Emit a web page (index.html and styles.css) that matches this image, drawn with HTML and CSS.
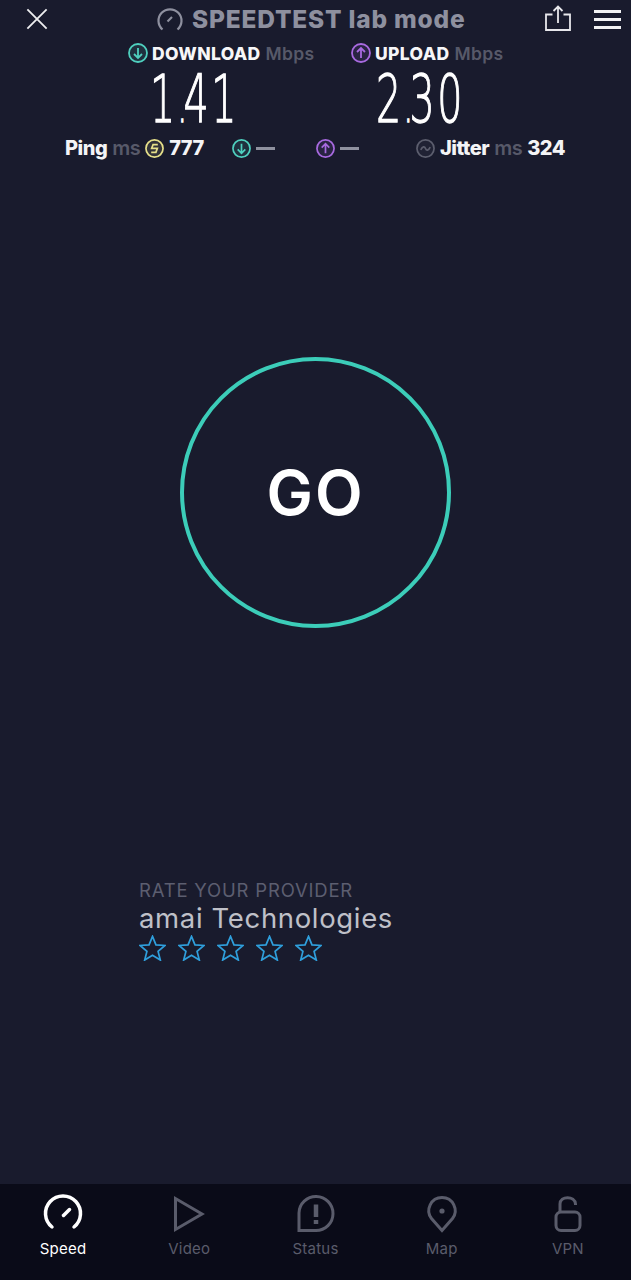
FILE: index.html
```html
<!DOCTYPE html>
<html lang="en">
<head>
<meta charset="utf-8">
<title>Speedtest</title>
<link rel="stylesheet" href="styles.css">
</head>
<body>
<div class="app">
  <header class="topbar">
    <svg class="ico-close" viewBox="0 0 24 24"><path d="M1.5 1.5 22.5 22.5M22.5 1.5 1.5 22.5"/></svg>
    <div class="title">
      <svg class="ico-title" viewBox="0 0 26 24"><path d="M5.5 22.5A11.5 11.5 0 1 1 20.5 22.5"/><path d="M10.5 14.5 15 10"/></svg>
      <span>SPEEDTEST lab mode</span>
    </div>
    <svg class="ico-share" viewBox="0 0 26 26"><path d="M7.5 9.5H1V25H25V9.5H18.5"/><path d="M13 18V1.5M8.5 6 13 1.5 17.5 6"/></svg>
    <div class="menu"><i></i><i></i><i></i></div>
  </header>

  <section class="metrics">
    <div class="metric">
      <div class="metric-label">
        <svg class="badge badge-teal" viewBox="0 0 20 20"><circle cx="10" cy="10" r="9"/><path d="M10 5V15M6 11 10 15 14 11"/></svg>
        <b>DOWNLOAD</b><span class="dim">Mbps</span>
      </div>
      <div class="metric-value value-down">1<span class="pt">.</span>41</div>
    </div>
    <div class="metric">
      <div class="metric-label">
        <svg class="badge badge-purple" viewBox="0 0 20 20"><circle cx="10" cy="10" r="9"/><path d="M10 15V5M6 9 10 5 14 9"/></svg>
        <b>UPLOAD</b><span class="dim">Mbps</span>
      </div>
      <div class="metric-value">2<span class="pt">.</span>30</div>
    </div>
  </section>

  <section class="stats">
    <div class="stat stat-ping">
      <b>Ping</b><span class="dim">ms</span>
      <svg class="badge-sm badge-yellow" viewBox="0 0 20 20"><circle cx="10" cy="10" r="9"/><path d="M13.500 6H8.500L7 9.800H13L11.500 14H6.500"/></svg>
      <b>777</b>
    </div>
    <div class="stat stat-down">
      <svg class="badge-sm badge-teal" viewBox="0 0 20 20"><circle cx="10" cy="10" r="9"/><path d="M10 5V15M6 11 10 15 14 11"/></svg>
      <i class="dash"></i>
    </div>
    <div class="stat stat-up">
      <svg class="badge-sm badge-purple" viewBox="0 0 20 20"><circle cx="10" cy="10" r="9"/><path d="M10 15V5M6 9 10 5 14 9"/></svg>
      <i class="dash"></i>
    </div>
    <div class="stat stat-jitter">
      <svg class="badge-sm badge-grey" viewBox="0 0 20 20"><circle cx="10" cy="10" r="9"/><path d="M5 11.5C7 7.5 9 7.5 10 10S13 12.5 15 8.5"/></svg>
      <b>Jitter</b><span class="dim">ms</span><b>324</b>
    </div>
  </section>

  <main class="main">
    <div class="go">GO</div>
    <div class="rate">
      <div class="rate-label">RATE YOUR PROVIDER</div>
      <div class="rate-name">amai Technologies</div>
      <div class="stars">
        <svg class="star" viewBox="0 0 28 27"><path d="M14 1.5 17.6 10.2 27 10.9 19.8 17 22.1 26 14 21.1 5.900 26 8.200 17 1 10.900 10.400 10.200Z"/></svg>
        <svg class="star" viewBox="0 0 28 27"><path d="M14 1.5 17.6 10.2 27 10.9 19.8 17 22.1 26 14 21.1 5.900 26 8.200 17 1 10.900 10.400 10.200Z"/></svg>
        <svg class="star" viewBox="0 0 28 27"><path d="M14 1.5 17.6 10.2 27 10.9 19.8 17 22.1 26 14 21.1 5.900 26 8.200 17 1 10.900 10.400 10.200Z"/></svg>
        <svg class="star" viewBox="0 0 28 27"><path d="M14 1.5 17.6 10.2 27 10.9 19.8 17 22.1 26 14 21.1 5.900 26 8.200 17 1 10.900 10.400 10.200Z"/></svg>
        <svg class="star" viewBox="0 0 28 27"><path d="M14 1.5 17.6 10.2 27 10.9 19.8 17 22.1 26 14 21.1 5.900 26 8.200 17 1 10.900 10.400 10.200Z"/></svg>
      </div>
    </div>
  </main>

  <nav class="tabs">
    <div class="tab tab-active">
      <svg viewBox="0 0 40 40"><path d="M9 33A17.500 17.500 0 1 1 31 33" class="round"/><path d="M20.500 21.500 26.500 15.500" class="round"/></svg>
      <span>Speed</span>
    </div>
    <div class="tab">
      <svg viewBox="0 0 40 40"><path d="M6.500 4.500V35.500L33 20Z"/></svg>
      <span>Video</span>
    </div>
    <div class="tab">
      <svg viewBox="0 0 40 40"><path d="M4 36.500V19A17 17 0 1 1 21 36.500Z"/><path d="M21 10.500V23" class="thick"/><path d="M21 26V30" class="thick"/></svg>
      <span>Status</span>
    </div>
    <div class="tab">
      <svg viewBox="0 0 40 40"><path d="M20 36.500 9.500 24.500C3 16 9 3.500 20 3.500S37 16 30.500 24.500Z"/><circle cx="20" cy="17" r="2.600" class="dot"/></svg>
      <span>Map</span>
    </div>
    <div class="tab">
      <svg viewBox="0 0 40 40"><rect x="8" y="18" width="24" height="18.500" rx="5"/><path d="M12 18V10C12 1.500 27 1.500 27.500 10V11"/></svg>
      <span>VPN</span>
    </div>
  </nav>
</div>
</body>
</html>
```
FILE: styles.css
```css
* { box-sizing: border-box; }
html, body { margin: 0; padding: 0; }
body { background: #191b2d; font-family: "Inter", "Open Sans", sans-serif; color: #fff; }
.app { width: 631px; height: 1280px; display: flex; flex-direction: column; overflow: hidden; }

svg { display: block; fill: none; stroke: currentColor; flex: none; }

.topbar { height: 38px; display: flex; align-items: center; padding: 0 10px 0 26px; }
.ico-close { width: 22px; height: 22px; stroke-width: 2; color: #eeeef0; }
.title { display: flex; align-items: center; gap: 9px; margin-left: 109px; color: #8e909f; font-size: 24.500px; font-weight: 800; letter-spacing: 0.8px; white-space: nowrap; }
.ico-title { width: 26px; height: 24px; stroke-width: 2.200; }
.ico-share { width: 26px; height: 26px; stroke-width: 1.800; color: #e8e8ec; margin-left: 79px; margin-top: -2px; }
.menu { display: flex; flex-direction: column; gap: 5px; margin-left: 23px; width: 28px; }
.menu i { display: block; height: 3px; background: #f2f2f4; }

.metrics { display: flex; padding-left: 128px; height: 86px; margin-top: 5px; }
.metric { width: 223px; }
.metric-label { display: flex; align-items: center; height: 20px; font-size: 17.500px; letter-spacing: 0.35px; }
.metric-label b { font-weight: 800; margin-left: 4px; color: #f6f6f8; }
.dim { color: #575969; font-weight: 600; margin-left: 5px; }
.metric-value { margin: 4px 0 0 25px; width: 81px; font-family: "DejaVu Sans", sans-serif; font-weight: 200; font-size: 66px; line-height: 66px; letter-spacing: 4px; white-space: nowrap; color: #fff; -webkit-text-stroke: 1.300px #fff; transform: scaleX(0.6); transform-origin: left center; }
.value-down { margin-left: 22px; }
.pt { font-size: 50px; letter-spacing: -6px; }

.badge { width: 20px; height: 20px; stroke-width: 1.800; }
.badge-sm { width: 19px; height: 19px; stroke-width: 1.800; }
.badge circle, .badge-sm circle { fill: currentColor; fill-opacity: 0.12; }
.badge-teal { color: #4fd0bf; }
.badge-purple { color: #a86ae0; }
.badge-yellow { color: #e6e08a; }
.badge-grey { color: #5c5e6e; }

.stats { display: flex; align-items: center; padding-left: 65px; height: 22px; margin-top: 8px; font-size: 20px; letter-spacing: -0.5px; }
.stats b { font-weight: 800; color: #f4f4f6; }
.stat { display: flex; align-items: center; }
.stat .badge-sm { margin-left: 5px; margin-right: 5px; }
.stat-ping { width: 167px; }
.stat-down { width: 84px; }
.stat-up { width: 100px; }
.stat-down .badge-sm, .stat-up .badge-sm { margin-left: 0; }
.stat-jitter .badge-sm { margin-left: 0; }
.stat-jitter .dim + b { margin-left: 5px; }
.dash { display: block; width: 19px; height: 3px; background: #8f919f; }

.main { flex: 1; display: flex; flex-direction: column; align-items: flex-start; }
.go { width: 271px; height: 271px; margin: 198px 0 0 180px; border: 4px solid #3ccdb9; border-radius: 50%; display: flex; align-items: center; justify-content: center; font-size: 62px; font-weight: 600; letter-spacing: 2px; color: #fff; }
.rate { margin: 252px 0 0 139px; }
.rate-label { font-size: 18.500px; line-height: 20px; letter-spacing: 0.8px; color: #5c5e70; font-weight: 400; white-space: nowrap; }
.rate-name { font-size: 27.500px; line-height: 34px; letter-spacing: 0.65px; margin-top: 1px; color: #bfc0c8; font-weight: 400; white-space: nowrap; }
.stars { display: flex; gap: 12px; margin-top: 0; }
.star { width: 27px; height: 26px; stroke-width: 1.800; color: #2f9fdc; }

.tabs { height: 96px; background: #0a0b18; display: grid; grid-template-columns: repeat(5, 1fr); margin-top: auto; }
.tab { display: flex; flex-direction: column; align-items: center; padding-top: 10px; color: #5a5c6b; font-size: 15px; font-weight: 400; letter-spacing: 0.25px; }
.tab svg { width: 40px; height: 40px; stroke-width: 3; }
.tab span { margin-top: 5px; line-height: 20px; }
.tab-active { color: #fff; }
.round { stroke-linecap: round; stroke-width: 3.500; }
.thick { stroke-width: 4.500; }
.dot { fill: currentColor; stroke: none; }
```
